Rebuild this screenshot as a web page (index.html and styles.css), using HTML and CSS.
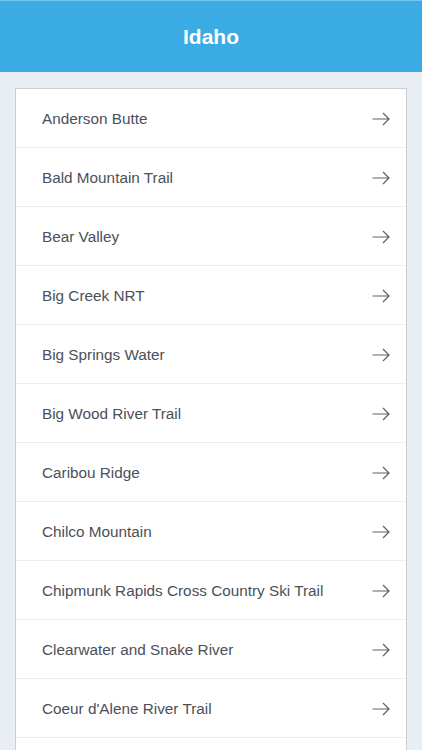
FILE: index.html
```html
<!DOCTYPE html>
<html>
<head>
<meta charset="utf-8">
<link rel="stylesheet" href="styles.css">
</head>
<body>
<header class="bar"><h1 class="title">Idaho</h1></header>
<main class="content">
  <ul class="list">
    <li class="row"><span class="label">Anderson Butte</span><svg class="arrow" viewBox="0 0 18 14"><path d="M0.5 7H17M11 1l6 6-6 6"/></svg></li>
    <li class="row"><span class="label">Bald Mountain Trail</span><svg class="arrow" viewBox="0 0 18 14"><path d="M0.5 7H17M11 1l6 6-6 6"/></svg></li>
    <li class="row"><span class="label">Bear Valley</span><svg class="arrow" viewBox="0 0 18 14"><path d="M0.5 7H17M11 1l6 6-6 6"/></svg></li>
    <li class="row"><span class="label">Big Creek NRT</span><svg class="arrow" viewBox="0 0 18 14"><path d="M0.5 7H17M11 1l6 6-6 6"/></svg></li>
    <li class="row"><span class="label">Big Springs Water</span><svg class="arrow" viewBox="0 0 18 14"><path d="M0.5 7H17M11 1l6 6-6 6"/></svg></li>
    <li class="row"><span class="label">Big Wood River Trail</span><svg class="arrow" viewBox="0 0 18 14"><path d="M0.5 7H17M11 1l6 6-6 6"/></svg></li>
    <li class="row"><span class="label">Caribou Ridge</span><svg class="arrow" viewBox="0 0 18 14"><path d="M0.5 7H17M11 1l6 6-6 6"/></svg></li>
    <li class="row"><span class="label">Chilco Mountain</span><svg class="arrow" viewBox="0 0 18 14"><path d="M0.5 7H17M11 1l6 6-6 6"/></svg></li>
    <li class="row"><span class="label">Chipmunk Rapids Cross Country Ski Trail</span><svg class="arrow" viewBox="0 0 18 14"><path d="M0.5 7H17M11 1l6 6-6 6"/></svg></li>
    <li class="row"><span class="label">Clearwater and Snake River</span><svg class="arrow" viewBox="0 0 18 14"><path d="M0.5 7H17M11 1l6 6-6 6"/></svg></li>
    <li class="row"><span class="label">Coeur d'Alene River Trail</span><svg class="arrow" viewBox="0 0 18 14"><path d="M0.5 7H17M11 1l6 6-6 6"/></svg></li>
    <li class="row"></li>
  </ul>
</main>
</body>
</html>
```
FILE: styles.css
```css
html, body {
  margin: 0;
  padding: 0;
  background: #e9eef5;
  font-family: "Liberation Sans", Arial, sans-serif;
  height: 750px;
  overflow: hidden;
}
.bar {
  height: 71px;
  background: #3babe3;
  border-top: 1px solid #72c6ef;
  display: flex;
  align-items: center;
  justify-content: center;
}
.title {
  margin: 0;
  color: #ffffff;
  font-size: 21px;
  font-weight: bold;
  line-height: 1;
}
.content {
  padding: 16px 15px 0 15px;
}
.list {
  list-style: none;
  margin: 0;
  padding: 0;
  background: #ffffff;
  border: 1px solid #c9cdd4;
  border-bottom: none;
}
.row {
  height: 58px;
  box-sizing: content-box;
  border-bottom: 1px solid #eceef1;
  display: flex;
  align-items: center;
  justify-content: space-between;
  padding: 0 16px 0 26px;
}
.label {
  color: #4b5059;
  font-size: 15.3px;
  padding-top: 2px;
}
.arrow {
  width: 18px;
  height: 14px;
  fill: none;
  stroke: #5b6068;
  stroke-width: 1.2;
  margin-top: 1px;
}
```
